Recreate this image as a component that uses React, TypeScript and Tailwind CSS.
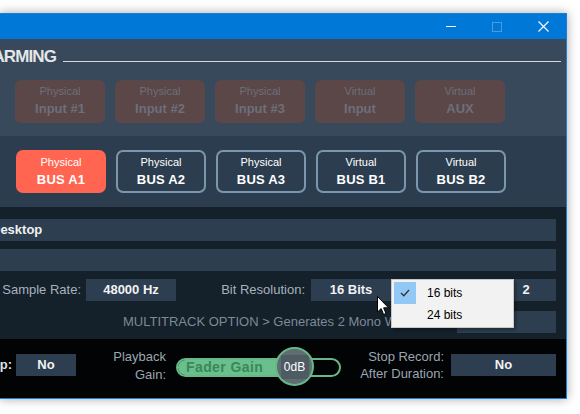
import React from 'react';

const FONT = { fontFamily: '"Liberation Sans", Arial, sans-serif' };

const disabledInputs = [
  ['Physical', 'Input #1'],
  ['Physical', 'Input #2'],
  ['Physical', 'Input #3'],
  ['Virtual', 'Input'],
  ['Virtual', 'AUX'],
];

const buses = [
  ['Physical', 'BUS A1', true],
  ['Physical', 'BUS A2', false],
  ['Physical', 'BUS A3', false],
  ['Virtual', 'BUS B1', false],
  ['Virtual', 'BUS B2', false],
] as const;

function TitleBar() {
  return (
    <div className="h-[25px] bg-[#0078d7] flex justify-end">
      <div className="w-[46px] h-full flex items-center justify-center">
        <div className="w-[10px] h-px bg-white" />
      </div>
      <div className="w-[46px] h-full flex items-center justify-center">
        <div className="w-[10px] h-[10px] border border-[#4a9be0]" />
      </div>
      <div className="w-[46px] h-full flex items-center justify-center">
        <svg width="11" height="11" viewBox="0 0 11 11">
          <path d="M0.5 0.5 L10.5 10.5 M10.5 0.5 L0.5 10.5" stroke="#fff" strokeWidth="1.1" />
        </svg>
      </div>
    </div>
  );
}

function Field({ children, className }: { children?: React.ReactNode; className?: string }) {
  return (
    <div
      className={
        'h-[22px] bg-[#2c3e50] flex items-center justify-center text-[13px] font-bold text-[#f2f2f2] ' +
        (className ?? '')
      }
    >
      {children}
    </div>
  );
}

export default function App() {
  return (
    <div className="relative w-[580px] h-[414px] overflow-hidden bg-white" style={FONT}>
      <div className="pt-[13px]">
        <div className="-ml-px w-[568px] border border-[#1a7fd6] shadow-[0_0_10px_rgba(0,0,0,0.35)] overflow-hidden">
          <TitleBar />

          {/* input arming */}
          <div className="h-[97px] bg-[#37495b] pt-[3px]">
            <div className="flex items-start h-[30px] pr-[5px]">
              <div className="w-[56px] flex justify-end overflow-visible">
                <span className="whitespace-nowrap text-[17px] font-bold leading-[30px] text-[#e4e6e8] tracking-[-0.9px]">
                  INPUT ARMING
                </span>
              </div>
              <div className="flex-1 h-px bg-[#d4d8dc] mt-[19px] ml-[7px]" />
            </div>
            <div className="flex gap-[10px] pl-[15px] mt-[8px]">
              {disabledInputs.map(([top, bottom]) => (
                <div
                  key={bottom + top}
                  className="w-[90px] h-[43px] rounded-[6px] bg-[#5b4648] flex flex-col items-center pt-[4px] text-[#6c7079]"
                >
                  <span className="text-[11px] leading-[14px]">{top}</span>
                  <span className="text-[13px] font-bold leading-[18px] mt-[2px]">{bottom}</span>
                </div>
              ))}
            </div>
          </div>

          {/* bus selection */}
          <div className="h-[71px] bg-[#2c3d4f] pt-[14px]">
            <div className="flex gap-[10px] pl-[16px]">
              {buses.map(([top, bottom, active]) => (
                <div
                  key={bottom}
                  className={
                    'w-[90px] h-[43px] rounded-[7px] border-2 flex flex-col items-center pt-[3px] text-white ' +
                    (active ? 'bg-[#ff6550] border-[#ff6550]' : 'border-[#7a97ae]')
                  }
                >
                  <span className="text-[11px] leading-[14px]">{top}</span>
                  <span className="text-[13px] font-bold leading-[18px] mt-[2px] tracking-[0.2px]">{bottom}</span>
                </div>
              ))}
            </div>
          </div>

          {/* recorder options */}
          <div className="h-[132px] bg-[#14202a] pt-[12px] pr-[10px] flex flex-col">
            <div className="h-[22px] bg-[#2c3e50] flex items-center">
              <span className="-ml-[9px] text-[13px] font-bold text-[#f2f2f2]">Desktop</span>
            </div>
            <div className="h-[22px] bg-[#2c3e50] mt-[8px]" />
            <div className="flex items-center mt-[8px] text-[13px] text-[#a7b2bd]">
              <div className="w-[81px] text-right whitespace-nowrap">Sample Rate:</div>
              <Field className="ml-[5px] w-[90px]">48000 Hz</Field>
              <div className="w-[129px] text-right whitespace-nowrap">Bit Resolution:</div>
              <Field className="ml-[6px] w-[80px]">16 Bits</Field>
              <Field className="ml-auto w-[60px]">2</Field>
            </div>
            <div className="flex items-center mt-[10px] text-[13px] text-[#7d8a97]">
              <span className="pl-[123px] whitespace-nowrap">MULTITRACK OPTION &gt; Generates 2 Mono Wav</span>
              <Field className="ml-auto w-[99px]" />
            </div>
          </div>

          {/* playback */}
          <div className="h-[59px] bg-[#020304] flex items-start text-[13px]">
            <div className="w-[12px] flex justify-end mt-[15px] h-[22px] items-center">
              <span className="whitespace-nowrap font-bold text-[#dfe3e6]">Loop:</span>
            </div>
            <Field className="mt-[15px] ml-[4px] w-[60px]">No</Field>
            <div className="w-[90px] mt-[9px] text-right leading-[18px] text-[#9aa6b2]">
              Playback
              <br />
              Gain:
            </div>
            <div className="relative mt-[19px] ml-[10px] w-[165px] h-[19px] rounded-full border-2 border-[#66b888] bg-[#020304]">
              <div className="absolute left-0 top-0 bottom-0 w-[118px] rounded-l-full bg-[#6ac08c] flex items-center pl-[8px]">
                <span className="text-[14px] font-bold text-[#3a8757] tracking-[0.4px] whitespace-nowrap">Fader Gain</span>
              </div>
              <div className="absolute left-[97px] top-[-13px] w-[39px] h-[39px] rounded-full border-2 border-[#66b888] bg-[#5e6d70] flex items-center justify-center overflow-hidden">
                <div className="w-[28px] h-[24px] bg-[#4f5b63] flex items-center justify-center text-[12px] text-white">
                  0dB
                </div>
              </div>
            </div>
            <div className="w-[103px] mt-[9px] text-right leading-[17px] text-[#9aa6b2] whitespace-nowrap">
              Stop Record:
              <br />
              After Duration:
            </div>
            <Field className="mt-[15px] ml-[7px] w-[105px]">No</Field>
          </div>
        </div>
      </div>

      {/* open dropdown */}
      <div className="absolute left-[391px] top-[279px] w-[123px] h-[49px] bg-[#f2f2f2] border border-[#c8c8c8] shadow-[2px_2px_3px_rgba(0,0,0,0.3)] text-[12px] text-black">
        <div className="flex items-center h-[24px] pt-[2px] pl-[2px]">
          <div className="w-[22px] h-[22px] bg-[#91c8f6] flex items-center justify-center">
            <svg width="10" height="8" viewBox="0 0 10 8">
              <path d="M1 4 L3.8 6.8 L9 1" fill="none" stroke="#333" strokeWidth="1.3" />
            </svg>
          </div>
          <span className="ml-[11px]">16 bits</span>
        </div>
        <div className="flex items-center h-[22px] pl-[35px]">24 bits</div>
      </div>

      {/* mouse pointer */}
      <svg className="absolute left-[377px] top-[296px]" width="13" height="20" viewBox="0 0 13 20">
        <path
          d="M0.5 0.5 L0.5 16 L4.2 12.6 L6.6 18.5 L9 17.5 L6.6 11.8 L11.5 11.8 Z"
          fill="#fff"
          stroke="#000"
          strokeWidth="1"
          strokeLinejoin="round"
        />
      </svg>
    </div>
  );
}
